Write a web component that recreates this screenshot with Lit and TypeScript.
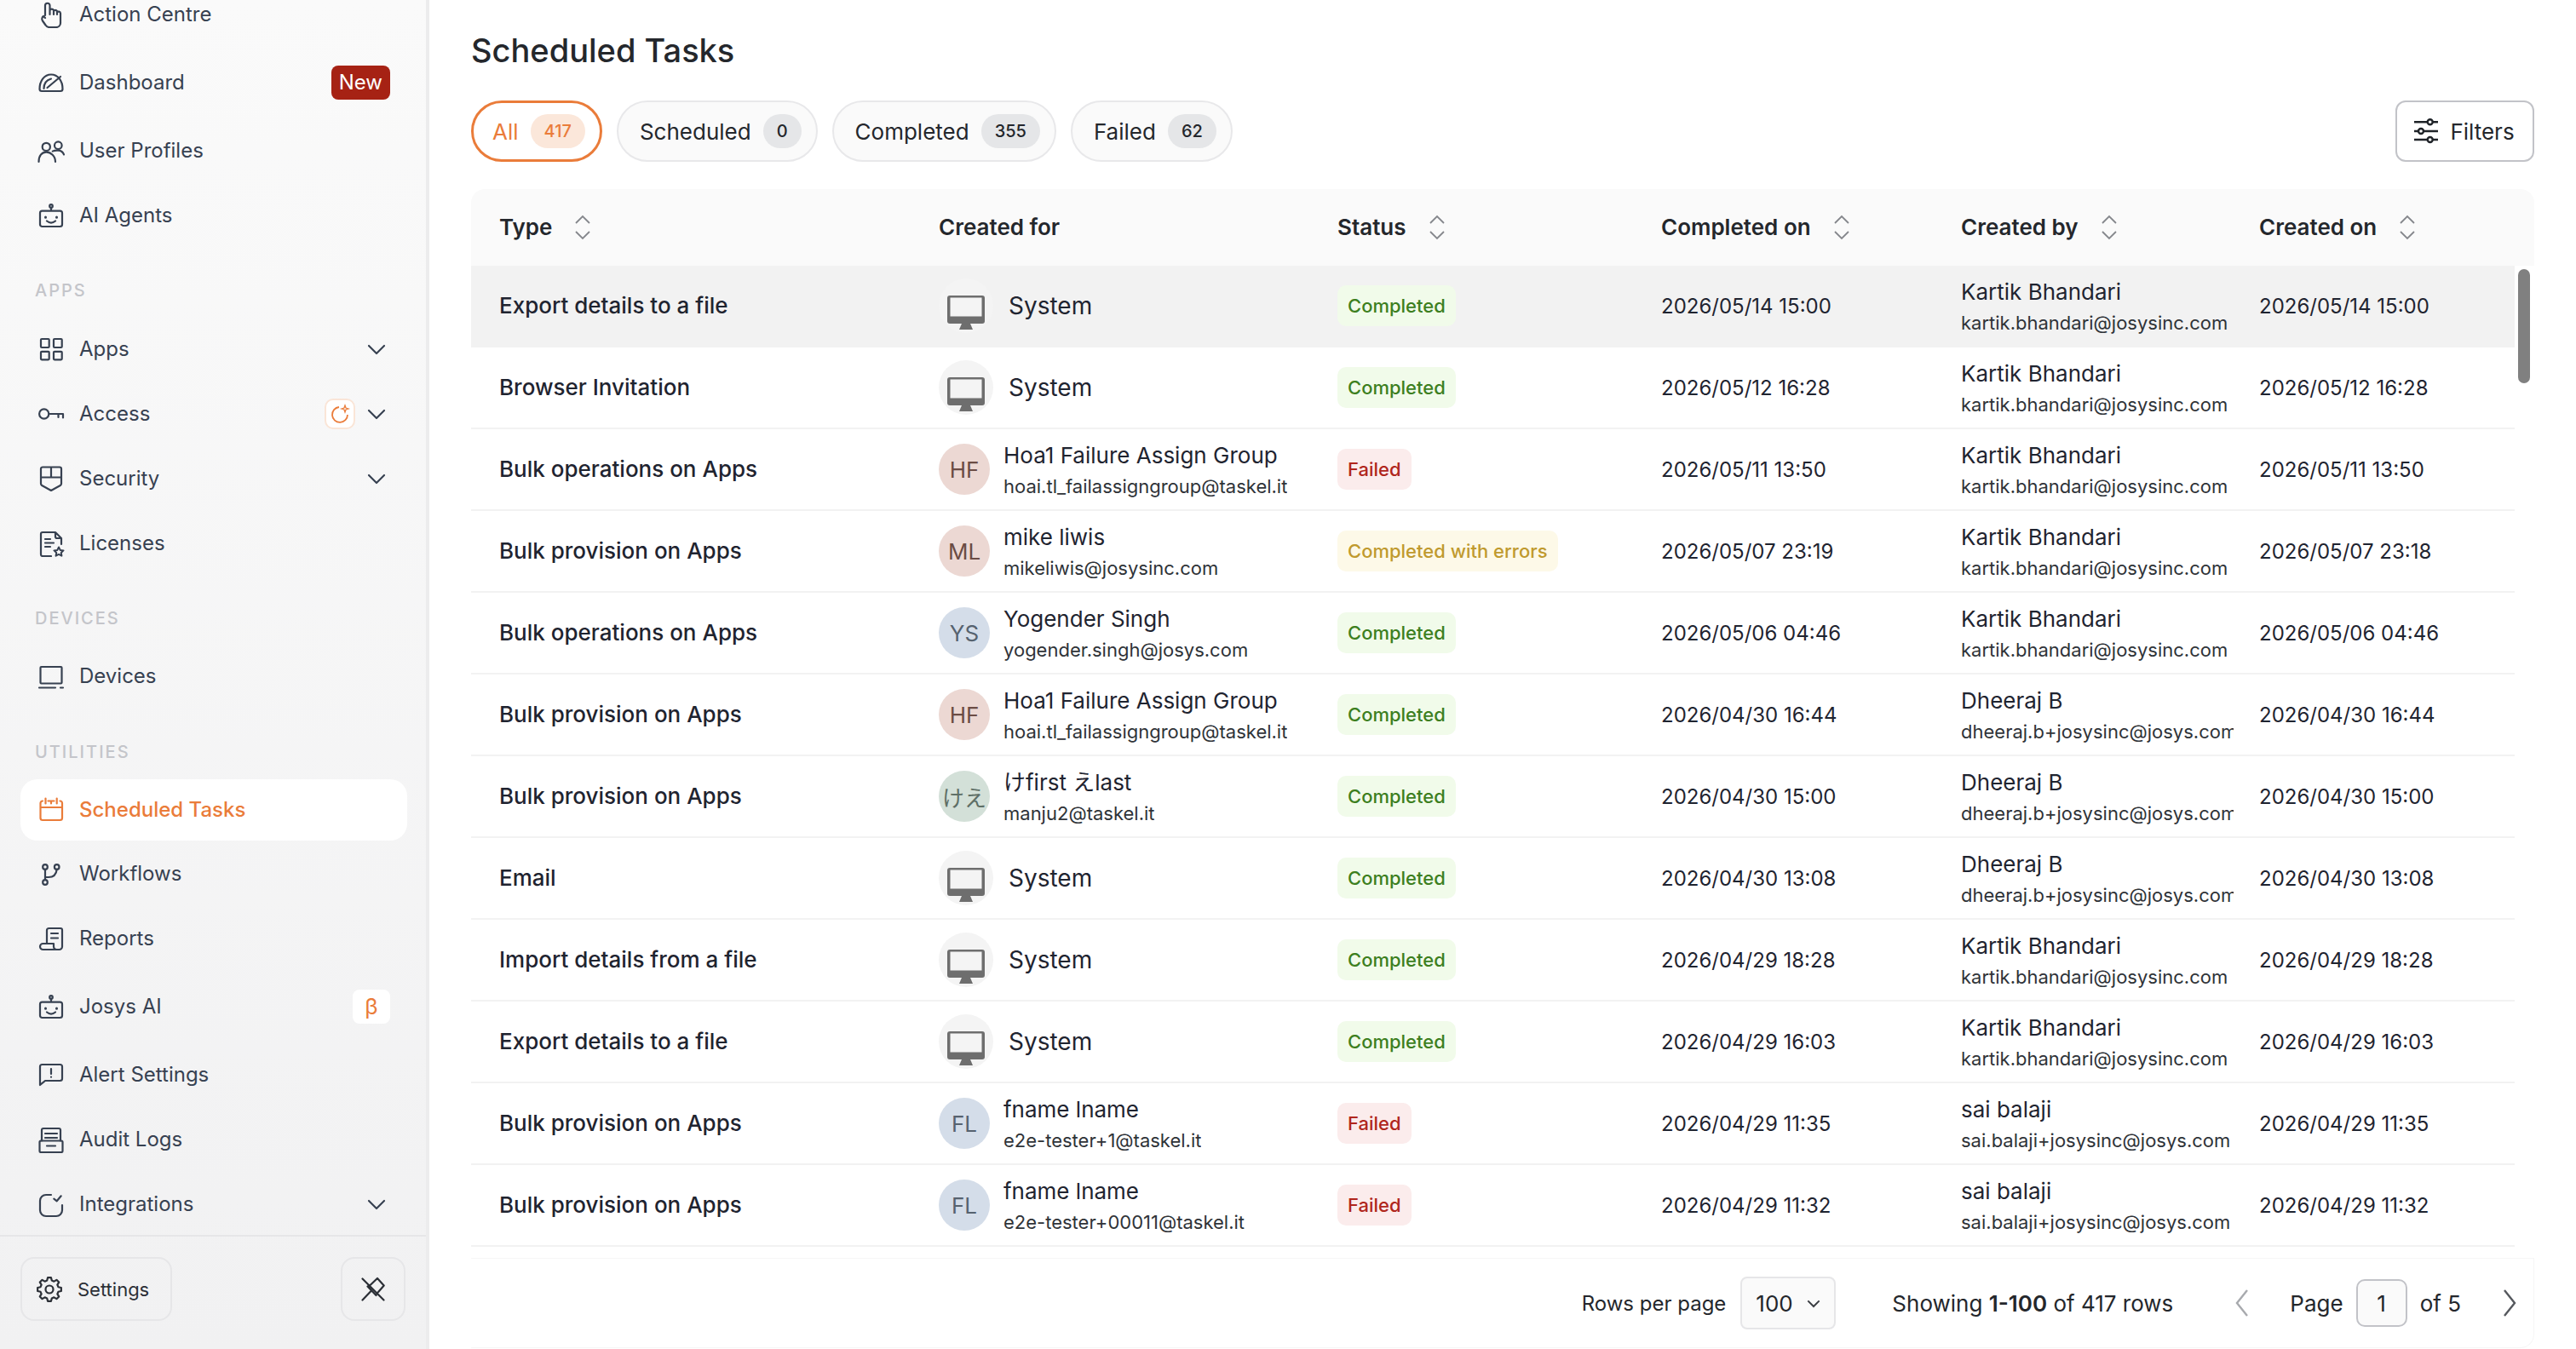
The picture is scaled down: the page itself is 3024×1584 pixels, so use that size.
import { LitElement, html, css, svg } from 'lit';
import { customElement } from 'lit/decorators.js';

// eight toothed cog, easier to compute than to write out by hand
const cogPath = () => {
  let d = '';
  for (let i = 0; i < 8; i++) {
    const a = (i * 45 - 90) * Math.PI / 180;
    const pt = (r: number, off: number) => {
      const t = a + off * Math.PI / 180;
      return `${(16 + r * Math.cos(t)).toFixed(2)} ${(16 + r * Math.sin(t)).toFixed(2)}`;
    };
    d += `${i ? 'L' : 'M'}${pt(10.8, -15)}L${pt(14, -8)}L${pt(14, 8)}L${pt(10.8, 15)}`;
  }
  return d + 'Z';
};

const icons: Record<string, unknown> = {
  hand: svg`<path d="M9 17V5.500a2.700 2.700 0 0 1 5.500 0V16M14.500 11a2.500 2.500 0 0 1 4.500 0v5M19 12a2.300 2.300 0 0 1 4 0v4M23 13.500a2.200 2.200 0 0 1 4 1V26a5 5 0 0 1-5 5h-8c-2 0-3.500-1-4.500-2.500L6 23.500c-1-1.500-1-4 1-5.500l2 2"/>`,
  gauge: svg`<path d="M5 26h22c1.500 0 2.500-1 2.500-2.500C29.500 14 24 6.500 16 6.500S2.500 14 2.500 23.500C2.500 25 3.500 26 5 26ZM7.500 23c0-6 3-10 8.500-11.500M11.500 22L27 9"/>`,
  users: svg`<circle cx="10.300" cy="11.400" r="4.600"/><circle cx="24.300" cy="9.700" r="4.300"/><path d="M1.500 29c0-7 3.500-11.400 8.800-11.400S21 22 21 29M17.700 16.600c1.500-.8 3-1.200 6.600-1 3 .2 5.700 2 6.700 4.900"/>`,
  robot: svg`<circle cx="16" cy="5" r="1.800"/><path d="M16 6.800v3.900M5.500 10.700h21a2.500 2.500 0 0 1 2.500 2.500v13.300a2.500 2.500 0 0 1-2.500 2.500h-21A2.500 2.500 0 0 1 3 26.500V13.200a2.500 2.500 0 0 1 2.500-2.500ZM11 22.500c3 2.500 7 2.500 10 0"/><path d="M9.500 18v.2M22.500 18v.2" stroke-width="3"/>`,
  grid: svg`<rect x="4" y="4" width="9.700" height="10" rx="1"/><rect x="19" y="4" width="9.700" height="10" rx="1"/><rect x="4" y="18.800" width="9.700" height="9.500" rx="1"/><rect x="19" y="18.800" width="9.700" height="9.500" rx="1"/>`,
  key: svg`<circle cx="7.700" cy="16" r="5.600"/><path d="M13.300 16H30v4.500M24.500 16v4"/>`,
  shield: svg`<path d="M6 2.500h20a2 2 0 0 1 2 2V22c0 1-.5 1.500-1.200 2L16 30 5.200 24C4.500 23.500 4 23 4 22V4.500a2 2 0 0 1 2-2ZM4 14.500h24M16 2.500v12"/>`,
  doc: svg`<path d="M16 31H6a2 2 0 0 1-2-2V5a2 2 0 0 1 2-2h15l7 7v7M21 3v5a2 2 0 0 0 2 2h5M9 11h6M9 15.500h10M9 20h6"/><path d="M25 20.500l1.700 3.400 3.800.5-2.700 2.600.6 3.700-3.400-1.800-3.400 1.800.6-3.700-2.700-2.600 3.800-.5Z" stroke-width="2"/>`,
  laptop: svg`<rect x="3.500" y="5" width="25" height="19.500" rx="1"/><path d="M2 29.500h19M27 29.500h3"/>`,
  cal: svg`<path d="M6 5.500A2.500 2.500 0 0 0 3.500 8v17.500A2.500 2.500 0 0 0 6 28h20.500a2.500 2.500 0 0 0 2.500-2.500V8a2.500 2.500 0 0 0-2.500-2.500M12.500 5.500h7M9.500 2.500v6M22.700 2.500v6M3.500 13H29M16 5.500v3"/>`,
  flow: svg`<circle cx="9" cy="8" r="2.800"/><circle cx="9" cy="26" r="2.800"/><circle cx="22.700" cy="8" r="2.800"/><path d="M9 10.800v12.400M9 20h4c5 0 9-3 9.700-9.200"/>`,
  report: svg`<path d="M11 22V6.500A2.500 2.500 0 0 1 13.500 4H27a2 2 0 0 1 2 2v19.500a3.500 3.500 0 0 1-3.500 3.500H6.500a3.500 3.500 0 0 1 0-7H19v3.500a3.500 3.500 0 0 0 3.500 3.500M16 10h8M16 15.500h8"/>`,
  alert: svg`<path d="M3 28V6.500A2.500 2.500 0 0 1 5.500 4h21A2.500 2.500 0 0 1 29 6.500v14a2.500 2.500 0 0 1-2.500 2.500H9Z"/><path d="M16 9v6M16 18.500v.2"/>`,
  audit: svg`<path d="M5 17.500V5a2 2 0 0 1 2-2h18a2 2 0 0 1 2 2v12.500M9 9h14M9 14h14M11 23.500h10"/><rect x="2.500" y="17.500" width="27" height="13.500" rx="1.500"/>`,
  integ: svg`<path d="M16 5H10a7 7 0 0 0-7 7v11a7 7 0 0 0 7 7h12a7 7 0 0 0 7-7v-6M19.300 9.700l3.400 2.600 5-6"/>`,
  chev: svg`<path d="M7 12l9 9 9-9"/>`,
  gear: svg`<circle cx="16" cy="16" r="4.500"/><path d="${cogPath()}"/>`,
  unpin: svg`<path d="M3.500 3.500l25 25M3.500 28.500l9.500-10M11 12.500L21 3l7.700 8.500-9.200 10.500M9.500 12.500l10 10.500"/>`,
};

const icon = (n: string) => html`<svg class="ico" viewBox="0 0 32 32">${icons[n]}</svg>`;

const KB = ['Kartik Bhandari', 'kartik.bhandari@josysinc.com'];
const DB = ['Dheeraj B', 'dheeraj.b+josysinc@josys.com'];
const SB = ['sai balaji', 'sai.balaji+josysinc@josys.com'];
const HF = ['HF', 'Hoa1 Failure Assign Group', 'hoai.tl_failassigngroup@taskel.it', 'rose'];

const rows = [
  { type: 'Export details to a file', user: null, status: 'Completed', done: '2026/05/14 15:00', by: KB, on: '2026/05/14 15:00' },
  { type: 'Browser Invitation', user: null, status: 'Completed', done: '2026/05/12 16:28', by: KB, on: '2026/05/12 16:28' },
  { type: 'Bulk operations on Apps', user: HF, status: 'Failed', done: '2026/05/11 13:50', by: KB, on: '2026/05/11 13:50' },
  { type: 'Bulk provision on Apps', user: ['ML', 'mike liwis', 'mikeliwis@josysinc.com', 'rose'], status: 'Completed with errors', done: '2026/05/07 23:19', by: KB, on: '2026/05/07 23:18' },
  { type: 'Bulk operations on Apps', user: ['YS', 'Yogender Singh', 'yogender.singh@josys.com', 'blue'], status: 'Completed', done: '2026/05/06 04:46', by: KB, on: '2026/05/06 04:46' },
  { type: 'Bulk provision on Apps', user: HF, status: 'Completed', done: '2026/04/30 16:44', by: DB, on: '2026/04/30 16:44' },
  { type: 'Bulk provision on Apps', user: ['けえ', 'けfirst えlast', 'manju2@taskel.it', 'green'], status: 'Completed', done: '2026/04/30 15:00', by: DB, on: '2026/04/30 15:00' },
  { type: 'Email', user: null, status: 'Completed', done: '2026/04/30 13:08', by: DB, on: '2026/04/30 13:08' },
  { type: 'Import details from a file', user: null, status: 'Completed', done: '2026/04/29 18:28', by: KB, on: '2026/04/29 18:28' },
  { type: 'Export details to a file', user: null, status: 'Completed', done: '2026/04/29 16:03', by: KB, on: '2026/04/29 16:03' },
  { type: 'Bulk provision on Apps', user: ['FL', 'fname lname', 'e2e-tester+1@taskel.it', 'blue'], status: 'Failed', done: '2026/04/29 11:35', by: SB, on: '2026/04/29 11:35' },
  { type: 'Bulk provision on Apps', user: ['FL', 'fname lname', 'e2e-tester+00011@taskel.it', 'blue'], status: 'Failed', done: '2026/04/29 11:32', by: SB, on: '2026/04/29 11:32' },
];

const statusClass: Record<string, string> = {
  Completed: 'ok',
  Failed: 'bad',
  'Completed with errors': 'warn',
};

@customElement('app-root')
export class AppRoot extends LitElement {
  static styles = css`
    :host {
      display: flex;
      width: 3024px;
      height: 1584px;
      overflow: hidden;
      background: #fff;
      font-family: Inter, 'Noto Sans CJK JP', sans-serif;
      color: #1f2328;
    }
    .side {
      width: 504px;
      flex: none;
      box-sizing: border-box;
      border-right: 4px solid #ececed;
      background: linear-gradient(#fafafa, #f1f1f2);
      display: flex;
      flex-direction: column;
    }
    .nav {
      height: 1452px;
      flex: none;
      overflow: hidden;
      box-sizing: border-box;
      border-bottom: 2px solid #e6e6e8;
    }
    .nav-in {
      margin-top: -21px;
      padding: 0 0 0 24px;
      width: 454px;
    }
    .item {
      height: 76px;
      display: flex;
      align-items: center;
      padding: 0 20px;
      gap: 17px;
      font-size: 24px;
      color: #374151;
    }
    .item .label { flex: 1; margin-top: -2px; }
    .item.tall { height: 84px; }
    .item.active {
      height: 72px;
      margin: 0 0 1px;
      background: #fff;
      border-radius: 20px;
      color: #ea7c3a;
      font-weight: 500;
    }
    .ico {
      width: 32px;
      height: 32px;
      flex: none;
      fill: none;
      stroke: currentColor;
      stroke-width: 2.200;
      stroke-linecap: round;
      stroke-linejoin: round;
    }
    .sec {
      color: #c4c5ca;
      font-size: 20px;
      font-weight: 500;
      letter-spacing: 2px;
      height: 80px;
      line-height: 100px;
      padding-left: 17px;
    }
    .sec.first { height: 81px; }
    .sec.third { height: 83px; line-height: 102px; }
    .new {
      background: #a62214;
      color: #fff;
      font-size: 24px;
      border-radius: 8px;
      padding: 0 9px;
      line-height: 40px;
    }
    .spark {
      width: 36px;
      height: 36px;
      box-sizing: border-box;
      margin-right: -8px;
      border-radius: 10px;
      background: #fff;
      border: 2px solid #fae5d7;
      display: grid;
      place-items: center;
    }
    .spark svg { width: 26px; height: 26px; fill: none; stroke: #ea7c3a; stroke-width: 1.800; }
    .beta {
      width: 44px;
      height: 40px;
      background: #fff;
      border-radius: 8px;
      color: #ea7c3a;
      font-size: 26px;
      text-align: center;
      line-height: 40px;
    }
    .side-foot {
      flex: 1;
      display: flex;
      justify-content: space-between;
      padding: 24px 24px 0;
    }
    .sbtn {
      height: 75px;
      box-sizing: border-box;
      border: 2px solid #e6e6e8;
      border-radius: 16px;
      display: flex;
      align-items: center;
      justify-content: center;
      gap: 17px;
      font-size: 22px;
      color: #2b2f36;
    }
    .sbtn.set { width: 178px; justify-content: flex-start; padding-left: 16px; }
    .sbtn.pin { width: 76px; }

    .main {
      flex: 1;
      min-width: 0;
      box-sizing: border-box;
      padding: 0 49px;
    }
    h1 {
      margin: 0;
      font-size: 38px;
      font-weight: 500;
      line-height: 48px;
      padding-top: 35px;
      color: #24272c;
    }
    .bar {
      display: flex;
      align-items: flex-start;
      justify-content: space-between;
      margin-top: 35px;
    }
    .tabs { display: flex; gap: 17px; }
    .tab {
      height: 72px;
      box-sizing: border-box;
      border: 2px solid #e8e8ea;
      background: #fafafa;
      border-radius: 36px;
      display: flex;
      align-items: center;
      gap: 14px;
      padding: 0 17px 0 25px;
      font-size: 26px;
      color: #24272c;
    }
    .tab b {
      font-weight: 500;
      font-size: 20px;
      height: 40px;
      line-height: 40px;
      padding: 0 16px;
      text-align: center;
      border-radius: 20px;
      background: #e5e6e8;
    }
    .tab.on {
      border: 3px solid #ea7c3a;
      background: #fff;
      color: #ea7c3a;
      padding: 0 17px 0 22px;
    }
    .tab.on b { background: #fbe7da; }
    .filters {
      width: 163px;
      height: 72px;
      box-sizing: border-box;
      border: 2px solid #c2c3c8;
      border-radius: 12px;
      display: flex;
      align-items: center;
      justify-content: center;
      gap: 12px;
      padding-right: 3px;
      font-size: 26px;
      background: #fff;
      color: #24272c;
    }
    .filters svg { width: 32px; height: 32px; fill: none; stroke: #1f2328; stroke-width: 2.400; }

    .table {
      margin-top: 32px;
      width: 2422px;
      height: 1362px;
      box-sizing: border-box;
      border-radius: 16px;
      position: relative;
    }
    .cols {
      display: grid;
      grid-template-columns: 549px 468px 380px 352px 350px 1fr;
      align-items: center;
    }
    .head {
      height: 90px;
      box-sizing: border-box;
      padding-bottom: 1px;
      background: #fafafa;
      border-radius: 16px 16px 0 0;
      font-size: 26px;
      font-weight: 600;
      color: #24272c;
    }
    .head > div { display: flex; align-items: center; gap: 24px; }
    .head > div:first-child, .row > div:first-child { padding-left: 33px; }
    .sort { width: 24px; height: 34px; fill: none; stroke: #85878c; stroke-width: 1.800; flex: none; }
    .row {
      height: 96px;
      box-sizing: border-box;
      width: 2399px;
      border-bottom: 2px solid #f2f2f2;
      font-size: 26px;
      color: #1f2430;
    }
    .row > div:first-child { font-weight: 500; padding-bottom: 1px; }
    .row.hl { background: #f2f2f2; border-bottom-color: transparent; }
    .date { font-size: 24px; }
    .who { display: flex; align-items: center; gap: 16px; }
    .av {
      width: 60px;
      height: 60px;
      border-radius: 50%;
      flex: none;
      display: grid;
      place-items: center;
      font-size: 26px;
    }
    .av.rose { background: #ecd8d3; color: #6b4c44; }
    .av.blue { background: #d4dde9; color: #56626f; }
    .av.green { background: #d3e0d8; color: #5e6f66; }
    .av.sys {
      width: 64px;
      height: 64px;
      background: #f4f4f4;
    }
    .av.sys svg { width: 44px; height: 40px; margin-top: 16px; }
    .sys-name { margin-left: 2px; font-size: 28px; }
    .two { min-width: 0; overflow: hidden; white-space: nowrap; padding-top: 3px; }
    .two div:first-child { line-height: 36px; }
    .two div:last-child { font-size: 22px; line-height: 36px; color: #2f3338; }
    .by { width: 320px; }
    .chip {
      display: inline-block;
      height: 48px;
      line-height: 48px;
      padding: 0 12px;
      border-radius: 10px;
      font-size: 22px;
      font-weight: 500;
    }
    .chip.ok { background: #f1fbea; color: #3d7f1f; }
    .chip.bad { background: #fbecec; color: #b0261c; }
    .chip.warn { background: #fdf9e8; color: #c09a2e; }
    .thumb {
      position: absolute;
      left: 2403px;
      top: 94px;
      width: 14px;
      height: 134px;
      border-radius: 7px;
      background: #808080;
    }
    .pager {
      height: 106px;
      margin-top: 13px;
      box-sizing: border-box;
      display: flex;
      align-items: center;
      justify-content: flex-end;
      font-size: 24px;
      color: #24272c;
      border-top: 1px solid #f6f6f6;
      border-right: 1px solid #f6f6f6;
      border-bottom: 1px solid #f6f6f6;
      border-radius: 0 0 16px 0;
    }
    .sel {
      margin-left: 17px;
      width: 112px;
      height: 62px;
      box-sizing: border-box;
      border: 2px solid #e6e6e8;
      border-radius: 8px;
      background: #fafafa;
      display: flex;
      align-items: center;
      padding-left: 16px;
      gap: 12px;
      font-size: 26px;
    }
    .sel svg { width: 24px; height: 24px; fill: none; stroke: #3a3d42; stroke-width: 1.500; }
    .show { margin-left: 66px; font-size: 26px; }
    .show b { font-weight: 600; }
    .arr { width: 20px; height: 40px; fill: none; stroke-width: 2.400; flex: none; }
    .arr.prev { margin-left: 71px; stroke: #a8aaae; }
    .arr.next { margin-left: 47px; margin-right: 18px; stroke: #55585d; }
    .page { margin-left: 46px; font-size: 26px; }
    .of { font-size: 26px; }
    .pg {
      width: 60px;
      height: 56px;
      box-sizing: border-box;
      border: 2px solid #c2c3c8;
      border-radius: 10px;
      background: #fafafa;
      display: grid;
      place-items: center;
      margin: 0 15px;
      font-size: 26px;
    }
  `;

  navItem(ic: string, label: string, extra?: unknown, cls = '') {
    return html`<div class="item ${cls}">${icon(ic)}<span class="label">${label}</span>${extra}</div>`;
  }

  sort() {
    return html`<svg class="sort" viewBox="0 0 24 34"><path d="M4 12l8-8 8 8M4 22l8 8 8-8"/></svg>`;
  }

  chevron() {
    return html`<svg class="ico" viewBox="0 0 32 32">${icons.chev}</svg>`;
  }

  who(u: string[] | null) {
    if (!u) {
      return html`<div class="who">
        <div class="av sys">
          <svg viewBox="0 0 44 40">
            <rect width="44" height="33" rx="3" fill="#6e6e6e"/>
            <rect x="3.500" y="2.500" width="37" height="22" fill="#f4f4f4"/>
            <path d="M17 33h10l3 7H14Z" fill="#6e6e6e"/>
          </svg>
        </div>
        <span class="sys-name">System</span>
      </div>`;
    }
    return html`<div class="who">
      <div class="av ${u[3]}">${u[0]}</div>
      <div class="two"><div>${u[1]}</div><div>${u[2]}</div></div>
    </div>`;
  }

  render() {
    return html`
      <aside class="side">
        <div class="nav">
          <div class="nav-in">
            ${this.navItem('hand', 'Action Centre')}
            ${this.navItem('gauge', 'Dashboard', html`<span class="new">New</span>`, 'tall')}
            ${this.navItem('users', 'User Profiles')}
            ${this.navItem('robot', 'AI Agents')}
            <div class="sec first">APPS</div>
            ${this.navItem('grid', 'Apps', this.chevron())}
            ${this.navItem('key', 'Access', html`<span class="spark"><svg viewBox="0 0 26 26"><path d="M12 5a9 9 0 1 0 10 9"/><path d="M19 3l1 3 3 1-3 1-1 3-1-3-3-1 3-1Z" stroke-width="1.300"/></svg></span>${this.chevron()}`)}
            ${this.navItem('shield', 'Security', this.chevron())}
            ${this.navItem('doc', 'Licenses')}
            <div class="sec">DEVICES</div>
            ${this.navItem('laptop', 'Devices')}
            <div class="sec third">UTILITIES</div>
            ${this.navItem('cal', 'Scheduled Tasks', null, 'active')}
            ${this.navItem('flow', 'Workflows')}
            ${this.navItem('report', 'Reports')}
            ${this.navItem('robot', 'Josys AI', html`<span class="beta">β</span>`, 'tall')}
            ${this.navItem('alert', 'Alert Settings')}
            ${this.navItem('audit', 'Audit Logs')}
            ${this.navItem('integ', 'Integrations', this.chevron())}
          </div>
        </div>
        <div class="side-foot">
          <div class="sbtn set">${icon('gear')}<span>Settings</span></div>
          <div class="sbtn pin">${icon('unpin')}</div>
        </div>
      </aside>
      <main class="main">
        <h1>Scheduled Tasks</h1>
        <div class="bar">
          <div class="tabs">
            <div class="tab on">All <b>417</b></div>
            <div class="tab">Scheduled <b>0</b></div>
            <div class="tab">Completed <b>355</b></div>
            <div class="tab">Failed <b>62</b></div>
          </div>
          <div class="filters">
            <svg viewBox="0 0 32 32"><path d="M2 5.300h15.700M23.700 5.300H30M2 16h5M13 16h17M2 26h15.700M23.700 26H30"/><circle cx="20.700" cy="5.300" r="3"/><circle cx="10" cy="16" r="3"/><circle cx="20.700" cy="26" r="3"/></svg>
            Filters
          </div>
        </div>
        <div class="table">
          <div class="head cols">
            <div>Type ${this.sort()}</div>
            <div>Created for</div>
            <div>Status ${this.sort()}</div>
            <div>Completed on ${this.sort()}</div>
            <div>Created by ${this.sort()}</div>
            <div>Created on ${this.sort()}</div>
          </div>
          ${rows.map((r, i) => html`
            <div class="row cols ${i === 0 ? 'hl' : ''}">
              <div>${r.type}</div>
              ${this.who(r.user)}
              <div><span class="chip ${statusClass[r.status]}">${r.status}</span></div>
              <div class="date">${r.done}</div>
              <div class="two by"><div>${r.by[0]}</div><div>${r.by[1]}</div></div>
              <div class="date">${r.on}</div>
            </div>`)}
          <div class="thumb"></div>
          <div class="pager">
            <span>Rows per page</span>
            <div class="sel">100 <svg viewBox="0 0 18 18"><path d="M4 7l5 5 5-5"/></svg></div>
            <span class="show">Showing <b>1-100</b> of 417 rows</span>
            <svg class="arr prev" viewBox="0 0 20 40"><path d="M16 5L4 20l12 15"/></svg>
            <span class="page">Page</span>
            <div class="pg">1</div>
            <span class="of">of 5</span>
            <svg class="arr next" viewBox="0 0 20 40"><path d="M4 5l12 15L4 35"/></svg>
          </div>
        </div>
      </main>
    `;
  }
}
